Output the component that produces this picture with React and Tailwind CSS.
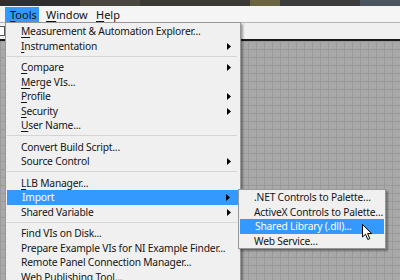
import React from 'react';

const FONT = { fontFamily: '"Noto Sans", "Open Sans", sans-serif' };

// Underline one access-key letter in a label.
function Label({ text, u }) {
  if (u == null) return <span>{text}</span>;
  return (
    <span>
      {text.slice(0, u)}
      <span className="underline underline-offset-[1.5px]">{text[u]}</span>
      {text.slice(u + 1)}
    </span>
  );
}

function Arrow() {
  return (
    <svg width="4" height="7" viewBox="0 0 4 7" className="absolute right-[9px] top-[4px]">
      <path d="M0 0 L4 3.5 L0 7 Z" fill="#000" />
    </svg>
  );
}

function Item({ text, u, sub, active }) {
  return (
    <div
      className={
        'relative flex h-[14.5px] items-center whitespace-nowrap pl-[15px] text-[10.25px] leading-none tracking-[-0.2px] ' +
        (active ? 'mx-[1px] bg-[#3399ff] text-white' : 'text-[#151515]')
      }
    >
      <Label text={text} u={u} />
      {sub && <Arrow />}
    </div>
  );
}

function Sep() {
  return (
    <div className="flex h-[7px] items-center pl-[1px] pr-[3px]">
      <div className="h-[2px] w-full border-t border-[#d4d4d4] border-b-white" />
    </div>
  );
}

const groups = [
  [
    { text: 'Measurement & Automation Explorer...', u: 0 },
    { text: 'Instrumentation', u: 0, sub: true },
  ],
  [
    { text: 'Compare', u: 0, sub: true },
    { text: 'Merge VIs...', u: 0 },
    { text: 'Profile', u: 0, sub: true },
    { text: 'Security', u: 0, sub: true },
    { text: 'User Name...', u: 0 },
  ],
  [
    { text: 'Convert Build Script...' },
    { text: 'Source Control', sub: true },
  ],
  [
    { text: 'LLB Manager...', u: 0 },
    { text: 'Import', sub: true, active: true },
    { text: 'Shared Variable', sub: true },
  ],
  [
    { text: 'Find VIs on Disk...' },
    { text: 'Prepare Example VIs for NI Example Finder...' },
    { text: 'Remote Panel Connection Manager...' },
    { text: 'Web Publishing Tool...' },
  ],
];

const subItems = [
  { text: '.NET Controls to Palette...' },
  { text: 'ActiveX Controls to Palette...' },
  { text: 'Shared Library (.dll)...', active: true },
  { text: 'Web Service...' },
];

export default function App() {
  return (
    <div className="relative flex h-[280px] w-[400px] flex-col overflow-hidden bg-[#f0f0f0]" style={FONT}>
      {/* blurred title bar remnant */}
      <div className="flex h-[6px] bg-[#3d3c3a]">
        <div className="w-[80px] bg-[#2f2f2f]" />
        <div className="w-[60px] bg-[#4a4740]" />
        <div className="w-[110px] bg-[#3a3936]" />
        <div className="w-[30px] bg-[#6b6440]" />
        <div className="w-[80px] bg-[#3c3c3c]" />
        <div className="flex-1 bg-[#4a5560]" />
      </div>

      {/* menu bar */}
      <div className="flex h-[16px] items-center whitespace-nowrap bg-[#f5f5f5] pl-[5px] text-[11px] leading-none text-[#111]">
        <div className="flex h-[15px] w-[34px] items-center bg-[#3399ff] pl-[5px]">
          <Label text="Tools" u={0} />
        </div>
        <div className="ml-[7px] w-[50px]">
          <Label text="Window" u={0} />
        </div>
        <div>
          <Label text="Help" u={0} />
        </div>
      </div>

      {/* toolbar strip */}
      <div className="flex h-[17px] border-t border-[#b5b5b5] bg-[#f0f0f0]">
        <div className="mt-[3px] h-[10px] w-[5px] border-y border-r border-[#555] bg-white" />
      </div>

      {/* diagram grid */}
      <div className="flex-1 border-t-2 border-[#1a1a1a] bg-[#a9a9a9] bg-[image:linear-gradient(to_right,#9a9a9a_1px,transparent_1px),linear-gradient(to_bottom,#9a9a9a_1px,transparent_1px)] bg-[size:8px_8px]" />

      {/* Tools dropdown */}
      <div className="absolute left-[5px] top-[22px] w-[236px] border border-[#979797] bg-[#f0f0f0] pt-[1px] shadow-[2px_2px_2px_rgba(0,0,0,0.35)]">
        {groups.map((g, i) => (
          <div key={i}>
            {i > 0 && <Sep />}
            {g.map((it) => (
              <Item key={it.text} {...it} />
            ))}
          </div>
        ))}
      </div>

      {/* Import submenu */}
      <div className="absolute left-[238px] top-[189px] w-[148px] border border-[#979797] bg-[#f0f0f0] shadow-[2px_2px_2px_rgba(0,0,0,0.35)]">
        {subItems.map((it) => (
          <Item key={it.text} {...it} />
        ))}
      </div>

      {/* mouse cursor */}
      <svg width="11" height="17" viewBox="0 0 11 17" className="absolute left-[362px] top-[224px]">
        <path d="M0.5 0.5 L0.5 13 L3.5 10.2 L5.8 15.5 L7.8 14.6 L5.6 9.6 L9.8 9.6 Z" fill="#fff" stroke="#000" strokeWidth="1" strokeLinejoin="round" />
      </svg>
    </div>
  );
}
